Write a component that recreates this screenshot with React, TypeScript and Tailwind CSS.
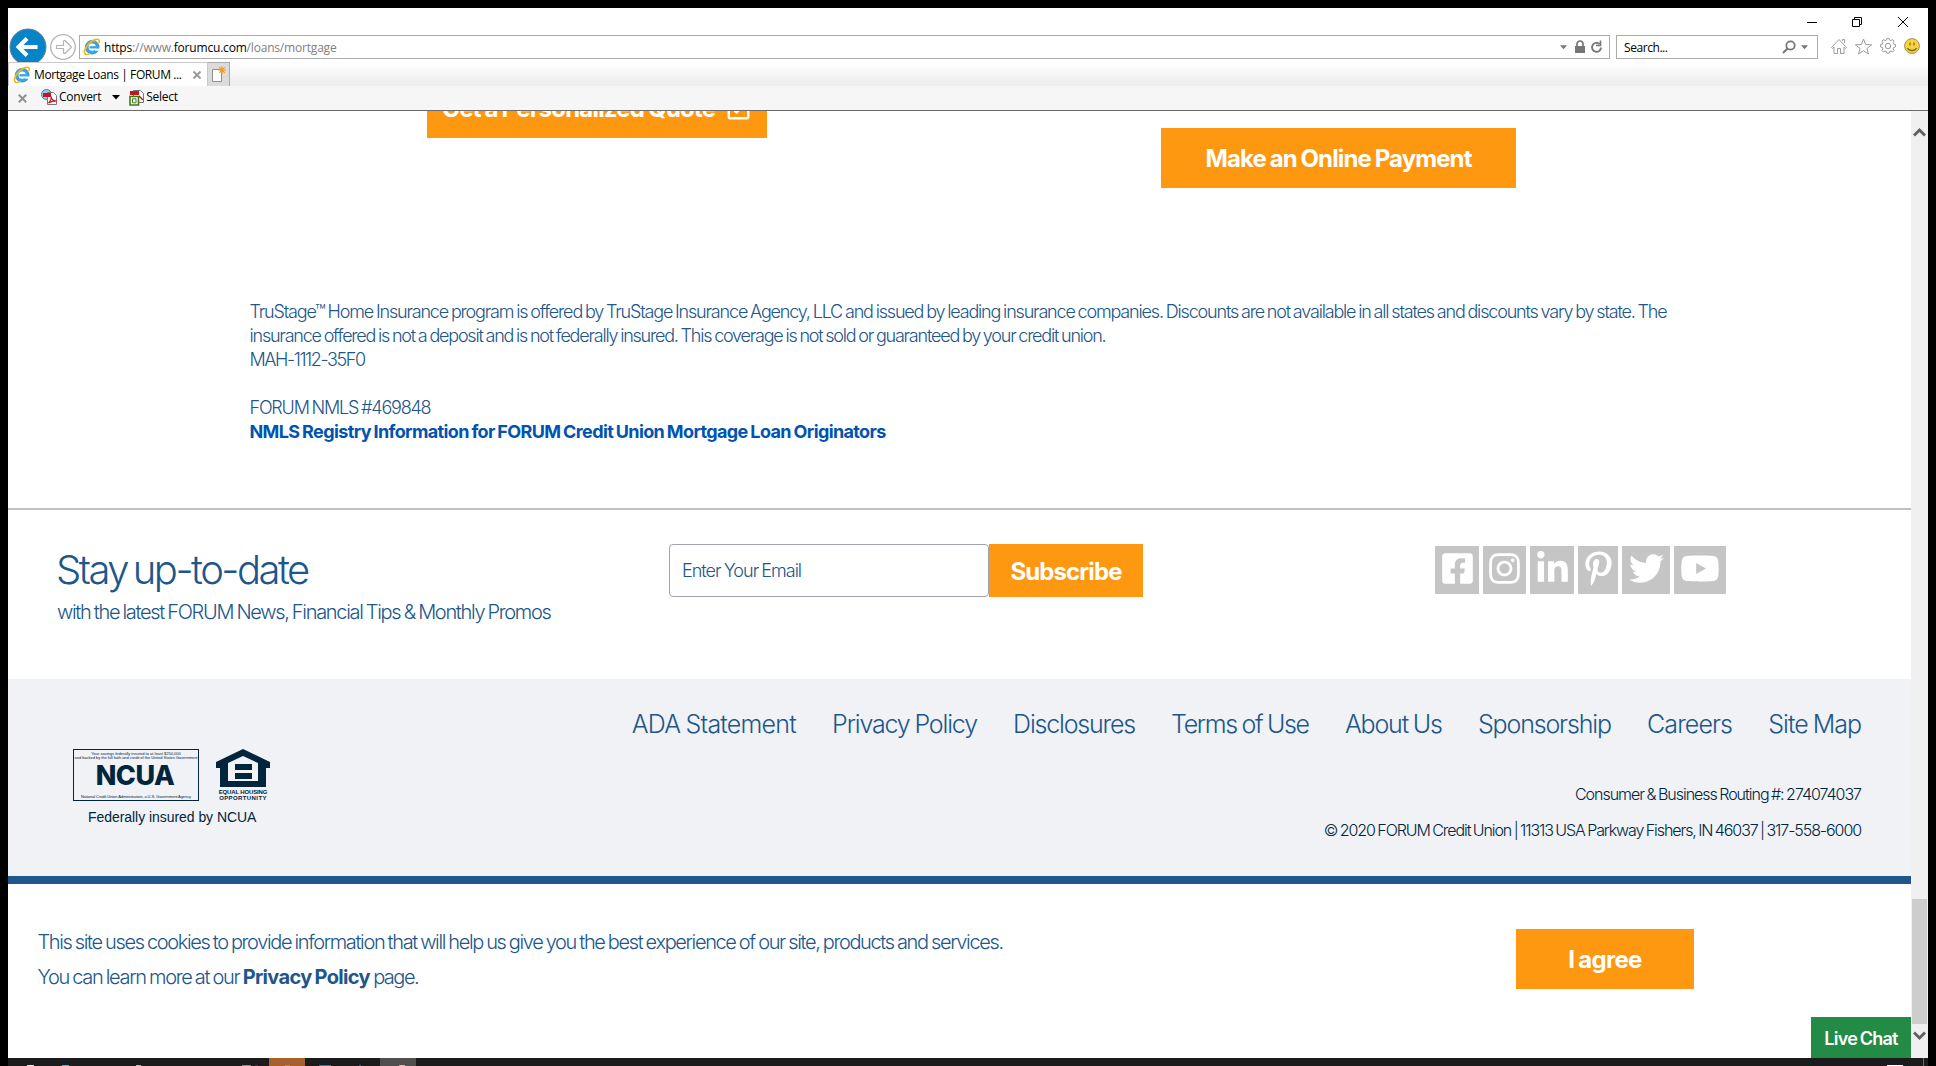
import {
  FaFacebookSquare,
  FaInstagram,
  FaLinkedinIn,
  FaPinterestP,
  FaTwitter,
  FaYoutube,
  FaRegCheckSquare,
} from "react-icons/fa";

function IeIcon() {
  return (
    <svg width="18" height="18" viewBox="0 0 18 18" className="shrink-0" fill="none">
      <circle cx="9.2" cy="9.2" r="5.3" stroke="#3fa5e0" strokeWidth="3.4" />
      <circle cx="9.2" cy="9.2" r="6.9" stroke="#2a83c4" strokeWidth="0.6" />
      <path d="M6.5 9.3h9" stroke="#3fa5e0" strokeWidth="2.4" />
      <path d="M12.2 10.6h4.6v2.2h-4.6z" fill="#fff" />
      <path d="M2.6 16.3C-1.5 13.5 6 3.6 12.2 1.6c3.2-1 4.6.2 3.9 2.8" stroke="#f2b90d" strokeWidth="1.7" strokeLinecap="round" />
      <path d="M2.6 16.3c1 .6 2.6.2 4.2-.8" stroke="#f2b90d" strokeWidth="1.4" strokeLinecap="round" />
    </svg>
  );
}

function Caret({ className = "" }: { className?: string }) {
  return (
    <svg width="8" height="5" viewBox="0 0 8 5" className={className}>
      <path d="M0 0h8L4 4.5z" fill="currentColor" />
    </svg>
  );
}

function BrowserBar() {
  return (
    <header className="h-[103px] shrink-0 bg-white font-['Open_Sans',sans-serif] text-[12px] font-normal text-black">
      <div className="flex h-[54px] overflow-hidden">
        <div className="flex shrink-0 items-end">
          <svg width="71" height="35" viewBox="0 0 71 35" fill="none">
            <circle cx="20" cy="20" r="18" fill="#0584c7" stroke="#6f7d86" strokeWidth="1" />
            <path d="M29.5 20H12M19 11.5L10.5 20l8.500 8.500" stroke="#fff" strokeWidth="4" />
            <circle cx="55" cy="20" r="12.3" stroke="#b4b4b4" strokeWidth="1.300" />
            <path d="M48.500 18.500h7v-4.500l1.500-.5 6.500 6.500-6.500 6.500-1.500-.5v-4.500h-7z" stroke="#b4b4b4" strokeWidth="1.200" />
          </svg>
        </div>
        <div className="mt-[27px] flex h-6 w-[1531px] shrink-0 items-center border border-[#ababab] pl-[3px] pr-[6px]">
          <IeIcon />
          <span className="ml-[3px] mt-[2px] leading-[22px] tracking-[-0.19px] text-[#808080]">
            <span className="text-black">https</span>://www.<span className="text-black">forumcu.com</span>/loans/mortgage
          </span>
          <div className="ml-auto flex items-center text-[#767676]">
            <Caret className="w-[7px]" />
            <svg width="12" height="14" viewBox="0 0 12 14" className="ml-[7px]" fill="none">
              <path d="M3 7V4a3 3 0 016 0v3" stroke="#767676" strokeWidth="1.700" />
              <rect x="1" y="6" width="10" height="7" fill="#767676" />
            </svg>
            <svg width="13" height="14" viewBox="0 0 13 14" className="ml-[4px]" fill="none">
              <path d="M9.500 4A4.500 4.500 0 1011 7.500" stroke="#767676" strokeWidth="1.900" />
              <path d="M6 5.500h4.500V.500" stroke="#767676" strokeWidth="1.600" />
            </svg>
          </div>
        </div>
        <div className="ml-[6px] mt-[27px] flex h-6 w-[202px] shrink-0 items-center border border-[#ababab] pl-[7px] pr-[9px]">
          <span className="mt-[2px] leading-[22px] tracking-[-0.434px]">Search...</span>
          <svg width="14" height="14" viewBox="0 0 14 14" className="ml-auto" fill="none">
            <circle cx="8.500" cy="5.500" r="4.200" stroke="#767676" strokeWidth="1.800" />
            <path d="M5.500 8.500L1 13" stroke="#767676" strokeWidth="2" />
          </svg>
          <Caret className="ml-[5px] w-[7px] text-[#767676]" />
        </div>
        <div className="-ml-[12px] flex w-[122px] shrink-0">
          <svg width="122" height="24" viewBox="0 0 122 24" fill="none" stroke="#000">
            <path d="M1 14.500h10" />
            <path d="M46.500 11.500h7v7h-7zM48.500 11.500v-2h7v7h-2" />
            <path d="M92 9l10 10M102 9l-10 10" />
          </svg>
        </div>
      </div>
      <div className="flex h-[24px] bg-gradient-to-b from-white to-[#ececec] text-[12px]">
        <div className="flex w-[200px] items-center border border-b-0 border-[#c9c9c9] bg-white pl-[4px]">
          <IeIcon />
          <span className="ml-[3px] mt-px tracking-[-0.394px]">Mortgage Loans | FORUM ...</span>
          <svg width="8" height="8" viewBox="0 0 8 8" className="ml-[11px]">
            <path d="M.5.5l7 7M7.500.5l-7 7" stroke="#9a9a9a" strokeWidth="2" />
          </svg>
        </div>
        <div className="flex w-[22px] items-center justify-center border border-l-0 border-b-0 border-[#ababab] bg-[#dcdcdc]">
          <svg width="15" height="17" viewBox="0 0 15 17" fill="none">
            <path d="M1.500 3.500h9v12h-9z" fill="#fff" stroke="#909090" />
            <path d="M11 0v8M7 4h8M8.200 1.200l5.600 5.600M13.800 1.200L8.200 6.800" stroke="#f29a1f" strokeWidth="1.100" />
          </svg>
        </div>
      </div>
      <div className="flex h-[25px] items-center border-b border-[#6b6b6b] bg-[#f6f6f6]">
        <svg width="9" height="9" viewBox="0 0 9 9" className="ml-[10px]">
          <path d="M.8.8l7.400 7.400M8.200.8L.8 8.200" stroke="#909090" strokeWidth="2" />
        </svg>
        <svg width="17" height="17" viewBox="0 0 17 17" className="-mt-[2px] ml-[14px]" fill="none">
          <circle cx="5.500" cy="5.500" r="5" fill="#9cc7ea" stroke="#4a7fb5" />
          <path d="M6.500 3.500h6l3 3v9h-9z" fill="#fff" stroke="#777" />
          <path d="M2 4h8v4H2z" fill="#c4161c" />
          <path d="M7.500 14c2-2 3-5 2.500-6.500.5 3 3 5 5.500 4.500-3-.3-5 .5-8 2z" stroke="#c4161c" strokeWidth="1.200" />
        </svg>
        <span className="-mt-[2px] ml-[1px] leading-6 tracking-[-0.25px]">Convert</span>
        <Caret className="-mt-px ml-[11px] text-black" />
        <svg width="16" height="17" viewBox="0 0 16 17" className="-mt-[2px] ml-[9px]" fill="none">
          <path d="M4.500 1.500h7l3 3v9h-10z" fill="#fff" stroke="#777" />
          <path d="M1 2h9v4H1z" fill="#c4161c" />
          <path d="M10 7l4 4" stroke="#c4161c" strokeWidth="1.500" />
          <path d="M1 7.500h8.500V16H1z" fill="#fff" stroke="#3f7a1d" strokeWidth="1.600" />
          <path d="M3.500 9.800h3.500v4H3.500z" stroke="#3f7a1d" />
        </svg>
        <span className="-mt-[2px] ml-[1px] leading-6 tracking-[-0.3px]">Select</span>
      </div>
    </header>
  );
}

function BrowserActions() {
  return (
    <svg width="90" height="18" viewBox="0 0 90 18" className="absolute left-[1830px] top-[38px]" fill="none" stroke="#9c9c9c">
      <path d="M1.500 9.500L9 1.500l7.500 8-1 1-1.500-1.500v6.500h-3.500v-5h-3v5H4V9l-1.500 1.500zM12.500 3V1.500h2V5" />
      <path d="M33.500 1l2.100 5.500 6 .3-4.700 3.700 1.600 5.500-5-3.200-5 3.200 1.600-5.500-4.700-3.700 6-.3z" />
      <circle cx="58" cy="8" r="2.700" />
      <path d="M56.500 2l.4-1.600h2.200l.4 1.600 1.500.6 1.600-1 1.500 1.500-1 1.600.6 1.500 1.800.5v2.200l-1.800.5-.6 1.500 1 1.600-1.500 1.500-1.600-1-1.500.6-.4 1.600h-2.200l-.4-1.600-1.500-.6-1.600 1-1.500-1.500 1-1.600-.6-1.500-1.800-.5V6.700l1.800-.5.6-1.500-1-1.600 1.500-1.500 1.600 1z" />
      <circle cx="82" cy="8" r="7.400" fill="#fbd43b" stroke="#a08f4e" />
      <path d="M80 4.500v3M84 4.500v3M77.500 10c1.500 3.300 7.500 3.300 9 0" stroke="#7c6a2a" strokeWidth="1.300" />
    </svg>
  );
}

const socials = [
  { Icon: FaFacebookSquare, box: "w-[44px]", icon: "size-[35px]" },
  { Icon: FaInstagram, box: "w-[43px]", icon: "size-[35px]" },
  { Icon: FaLinkedinIn, box: "w-[44px]", icon: "size-[35px]" },
  { Icon: FaPinterestP, box: "w-[40px]", icon: "size-[35px]" },
  { Icon: FaTwitter, box: "w-[48px]", icon: "size-[35px]" },
  { Icon: FaYoutube, box: "w-[52px]", icon: "w-[40px] h-[35px]" },
];

const links = [
  { label: "ADA Statement", cls: "tracking-[-0.78px]" },
  { label: "Privacy Policy", cls: "tracking-[-1.16px]" },
  { label: "Disclosures", cls: "tracking-[-1.194px]" },
  { label: "Terms of Use", cls: "tracking-[-1.34px]" },
  { label: "About Us", cls: "tracking-[-1.17px]" },
  { label: "Sponsorship", cls: "tracking-[-1.159px]" },
  { label: "Careers", cls: "tracking-[-0.896px]" },
  { label: "Site Map", cls: "tracking-[-1px]" },
];

function Offers() {
  return (
    <section className="h-[397px] shrink-0 overflow-hidden">
      <div className="flex items-start text-[24px] font-bold leading-[60px] text-white">
        <button className="-mt-[33px] ml-[419px] flex h-[60px] w-[340px] items-center bg-[#ff9811] pl-[15px]">
          <span className="mt-[2px] whitespace-nowrap tracking-[-0.8px]">Get a Personalized Quote</span>
          <FaRegCheckSquare className="ml-[11px] text-[25px]" />
        </button>
        <button className="ml-[394px] mt-[17px] h-[60px] w-[355px] bg-[#ff9811] pt-px tracking-[-0.89px]">Make an Online Payment</button>
      </div>
      <div className="ml-[241.500px] mt-[112px] whitespace-nowrap text-[18px] leading-6">
        <p className="tracking-[-1.17px]">
          TruStage™ Home Insurance program is offered by TruStage Insurance Agency, LLC and issued by leading insurance companies. Discounts are not available in all states and discounts vary by state. The
        </p>
        <p className="tracking-[-1.205px]">
          insurance offered is not a deposit and is not federally insured. This coverage is not sold or guaranteed by your credit union.
        </p>
        <p className="tracking-[-1.4px]">MAH-1112-35F0</p>
        <p className="mt-6 tracking-[-1.19px]">FORUM NMLS #469848</p>
        <a className="block font-bold tracking-[-0.62px] text-[#0053b0]">
          NMLS Registry Information for FORUM Credit Union Mortgage Loan Originators
        </a>
      </div>
    </section>
  );
}

function Newsletter() {
  return (
    <section className="flex h-[171px] shrink-0 items-start border-t-2 border-[#bfc1c3]">
      <div className="ml-[48px] mt-[35px] w-[613px] whitespace-nowrap">
        <h2 className="text-[40px] leading-[50px] tracking-[-2.5px] [word-spacing:-3px]">Stay up-to-date</h2>
        <p className="mt-px pl-px text-[20px] leading-8 tracking-[-1.31px]">with the latest FORUM News, Financial Tips &amp; Monthly Promos</p>
      </div>
      <div className="mt-[34px] flex h-[53px]">
        <div className="flex w-[320px] items-center rounded-[4px] border border-[#a0a4b4] pl-[12px] text-[18px] tracking-[-0.97px]">Enter Your Email</div>
        <button className="w-[154px] bg-[#ff9811] pt-px text-[24px] font-bold leading-[53px] tracking-[-0.904px] text-white">Subscribe</button>
      </div>
      <div className="ml-[292px] mt-[36px] flex gap-[4px]">
        {socials.map(({ Icon, box, icon }, i) => (
          <span key={i} className={`${box} flex h-[48px] items-start justify-center bg-[#c5c5c5] pt-[5px] text-white`}>
            <Icon className={icon} />
          </span>
        ))}
      </div>
    </section>
  );
}

function Seals() {
  return (
    <div className="ml-[65px] mt-[70px] w-[210px] text-[#00253d] [word-spacing:0px]">
      <div className="flex items-start">
        <div className="flex h-[52px] w-[126px] flex-col items-center overflow-hidden whitespace-nowrap border border-[#00253d] font-['Liberation_Sans',sans-serif] text-[4px] font-normal leading-[4px]">
          <span className="mt-[2px]">Your savings federally insured to at least $250,000</span>
          <span className="tracking-[-0.04px]">and backed by the full faith and credit of the United States Government</span>
          <span className="mt-[2px] pr-[2px] font-['Inter',sans-serif] text-[27px] font-extrabold leading-[28px] tracking-[-0.5px]">NCUA</span>
          <span className="mt-[5px] tracking-[-0.08px]">National Credit Union Administration, a U.S. Government Agency</span>
        </div>
        <div className="ml-[17px] flex w-[54px] flex-col items-center whitespace-nowrap font-['Liberation_Sans',sans-serif] text-[6px] font-bold leading-[6px]">
          <svg width="54" height="39" viewBox="0 0 54 39">
            <path fillRule="evenodd" d="M27 0L54 13v6h-4v19H4V19H0v-6zM27 7L12 14v18h30V14z" fill="#00253d" />
            <path d="M19 15h17v6H19zM19 24h17v6H19z" fill="#00253d" />
          </svg>
          <span className="mt-px tracking-[-0.15px]">EQUAL HOUSING</span>
          <span className="tracking-[0.4px]">OPPORTUNITY</span>
        </div>
      </div>
      <p className="ml-[15px] mt-[7px] whitespace-nowrap font-['Liberation_Sans',sans-serif] text-[14px] font-normal leading-[18px] tracking-[-0.05px]">Federally insured by NCUA</p>
    </div>
  );
}

function Footer() {
  return (
    <footer className="flex h-[205px] shrink-0 items-start justify-between border-b-8 border-[#20568a] bg-[#f0f2f6]">
      <Seals />
      <div className="flex flex-col items-end whitespace-nowrap pr-[50px] pt-[27px]">
        <nav className="flex gap-[36.2px] text-[25px] leading-9">
          {links.map((l) => (
            <a key={l.label} className={l.cls}>{l.label}</a>
          ))}
        </nav>
        <p className="mt-[40px] text-[16px] leading-6 tracking-[-1.02px] text-[#00253d]">Consumer &amp; Business Routing #: 274074037</p>
        <p className="mt-[12px] text-[16px] leading-6 tracking-[-1.075px] text-[#00253d]">
          © 2020 FORUM Credit Union | 11313 USA Parkway Fishers, IN 46037 | 317-558-6000
        </p>
      </div>
    </footer>
  );
}

function CookieNotice() {
  return (
    <section className="flex h-[174px] shrink-0 items-start">
      <div className="ml-[29.500px] mt-[41px] w-[1478.500px] whitespace-nowrap text-[20px] leading-[35px]">
        <p className="tracking-[-1.357px]">
          This site uses cookies to provide information that will help us give you the best experience of our site, products and services.
        </p>
        <p>
          <span className="tracking-[-1.32px]">You can learn more at our </span>
          <b className="font-bold tracking-[-0.66px]">Privacy Policy</b>
          <span className="tracking-[-1.5px]"> page.</span>
        </p>
      </div>
      <button className="mt-[45px] h-[60px] w-[178px] bg-[#ff9811] pt-[2px] text-[24px] font-bold tracking-[-0.7px] text-white">I agree</button>
    </section>
  );
}

function ScrollBar() {
  return (
    <div className="flex w-[17px] shrink-0 flex-col items-center bg-[#f0f0f0]">
      <svg width="13" height="10" viewBox="0 0 13 10" className="mt-[16px]" fill="none">
        <path d="M1 8.500l5.500-5.500L12 8.500" stroke="#606060" strokeWidth="3" />
      </svg>
      <div className="mt-auto h-[125px] w-[15px] bg-[#cdcdcd]" />
      <svg width="13" height="10" viewBox="0 0 13 10" className="mb-[17px] mt-[7px]" fill="none">
        <path d="M1 1.500L6.500 7 12 1.500" stroke="#606060" strokeWidth="3" />
      </svg>
    </div>
  );
}

function TaskBar() {
  return (
    <div className="flex h-[8px] shrink-0 items-end bg-[#1b1b1b]">
      <i className="ml-[19px] h-px w-[7px] bg-[#e8e8e8]" />
      <i className="ml-[28px] h-px w-[7px] bg-[#3cc3c9]" />
      <i className="ml-[67px] h-px w-[5px] bg-[#bdbdbd]" />
      <i className="ml-[101px] h-px w-[9px] bg-[#8a8a8a]" />
      <i className="ml-[4px] h-px w-[3px] bg-[#8b1a1a]" />
      <span className="ml-[11px] flex h-[8px] w-[36px] items-end bg-[#a66029]">
        <i className="ml-[16px] h-px w-[5px] bg-[#9a80c0]" />
      </span>
      <i className="ml-[14px] h-px w-[12px] bg-[#0f7fd4]" />
      <i className="ml-[28px] h-px w-[2px] bg-[#1f6f8f]" />
      <span className="ml-[19px] flex h-[8px] w-[36px] items-end bg-[#4f4f4f]">
        <i className="ml-[19px] h-px w-[6px] bg-[#f5c518]" />
      </span>
      <i className="ml-auto h-px w-[16px] bg-white" />
      <i className="ml-[20px] mr-[4px] h-[8px] w-px bg-[#6a6a6a]" />
    </div>
  );
}

export default function App() {
  return (
    <div className="relative flex h-[1066px] w-[1936px] flex-col overflow-hidden bg-black px-[8px] pt-[8px] font-['Inter',sans-serif] font-light text-[#20568a]">
      <BrowserBar />
      <div className="flex h-[947px] shrink-0">
        <main className="relative flex w-[1903px] shrink-0 flex-col overflow-hidden bg-white [word-spacing:-1px] [&_button]:[word-spacing:-1px]">
          <Offers />
          <Newsletter />
          <Footer />
          <CookieNotice />
          <button className="absolute bottom-0 right-0 h-[41px] w-[100px] bg-[#238b46] pt-px text-[18px] font-semibold tracking-[-0.78px] text-white">Live Chat</button>
        </main>
        <ScrollBar />
      </div>
      <TaskBar />
      <BrowserActions />
    </div>
  );
}
